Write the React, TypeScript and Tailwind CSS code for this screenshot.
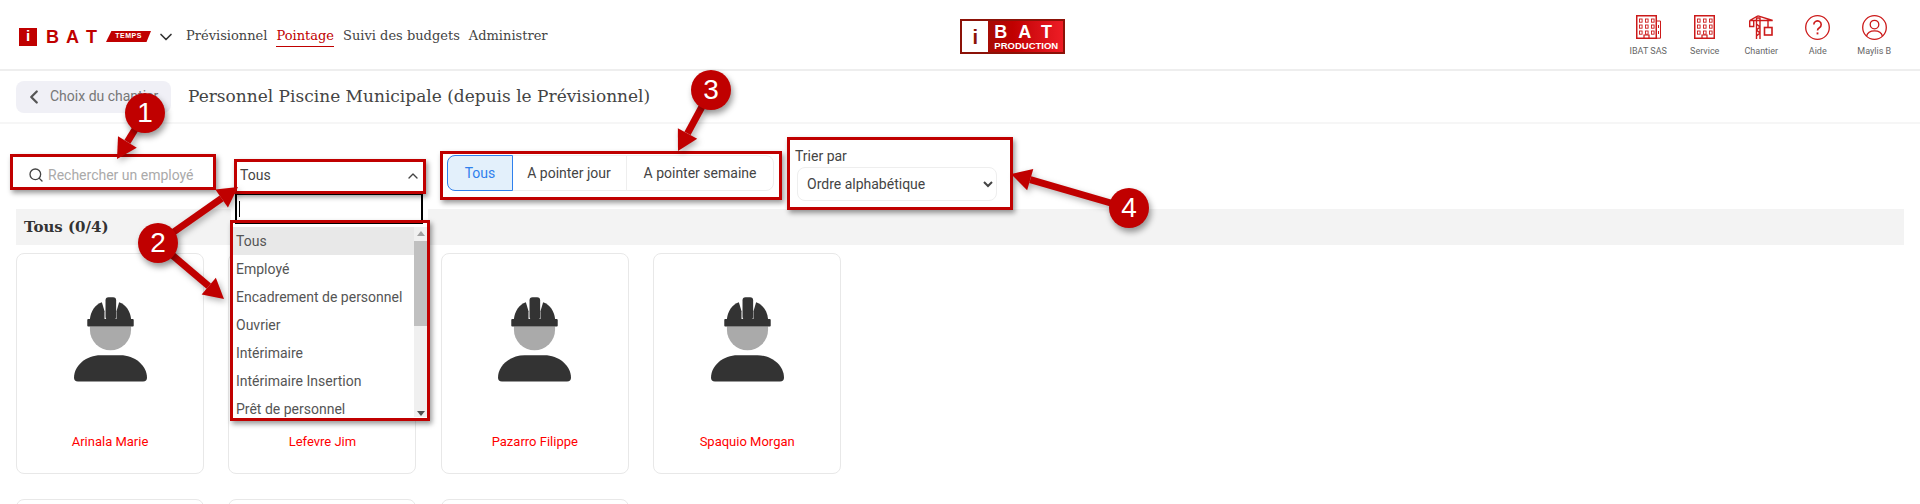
import { ChevronDown, ChevronLeft, ChevronUp, Search } from "lucide-react";

const NAV = ["Prévisionnel", "Pointage", "Suivi des budgets", "Administrer"];
const EMPLOYEES = ["Arinala Marie", "Lefevre Jim", "Pazarro Filippe", "Spaquio Morgan"];
const CATEGORIES = [
  "Tous",
  "Employé",
  "Encadrement de personnel",
  "Ouvrier",
  "Intérimaire",
  "Intérimaire Insertion",
  "Prêt de personnel",
];

const SLAB = "font-['DejaVu_Serif',serif]";
const RED = "#c00000";

function BuildingIcon({ wide }: { wide?: boolean }) {
  const columns = [5, 11, 17];
  const rows = [4, 10, 16];
  return (
    <svg width={wide ? 25 : 21} height="24" viewBox={wide ? "0 0 25 24" : "0 0 21 24"} fill="none" stroke="#cc1a1a">
      <rect x="0.75" y="0.75" width="19.5" height="22.5" strokeWidth="1.5" />
      {rows.map((y) =>
        columns.map((x) => <rect key={`${x}-${y}`} x={x - 1.5} y={y} width="2.6" height="3.2" strokeWidth="0.9" />),
      )}
      <path d="M8 23v-3h5v3" strokeWidth="1.2" />
      {wide ? <path d="M20.5 6h4v17.2h-4M22.5 10v3M22.5 16v3" strokeWidth="1" /> : null}
    </svg>
  );
}

function CraneIcon() {
  return (
    <svg width="25" height="24" viewBox="0 0 25 24" fill="none" stroke="#cc1a1a" strokeWidth="1.4">
      <path d="M7.5 24V3h3.5v21M7.5 9l3.5 3M11 12l-3.5 3M7.5 15l3.5 3M11 18l-3.5 3" />
      <path d="M0.7 5.5h23M0.7 5.5v6h4v-6M9 0.8L0.7 5.5M9 0.8l14.7 4.7" />
      <path d="M19 5.5v7" />
      <rect x="15.5" y="12.5" width="7.5" height="7.5" strokeWidth="1.6" />
    </svg>
  );
}

function HelpIcon() {
  return (
    <svg width="25" height="25" viewBox="0 0 25 25" fill="none" stroke="#cc1a1a" strokeWidth="1.3">
      <circle cx="12.5" cy="12.5" r="11.8" />
      <path d="M8.8 9.6a3.7 3.7 0 1 1 5.6 3.2c-1.3.8-1.9 1.4-1.9 2.8" strokeWidth="1.6" />
      <path d="M12.5 17.4v2" strokeWidth="1.8" />
    </svg>
  );
}

function UserIcon() {
  return (
    <svg width="25" height="25" viewBox="0 0 25 25" fill="none" stroke="#cc1a1a" strokeWidth="1.3">
      <circle cx="12.5" cy="12.5" r="11.8" />
      <circle cx="12.5" cy="9.6" r="4.3" />
      <path d="M4.6 21c.8-3.6 3.6-5.2 7.9-5.2s7.100 1.600 7.900 5.200" />
    </svg>
  );
}

function WorkerAvatar() {
  return (
    <svg width="73" height="85" viewBox="0 0 220 255" className="shrink-0">
      <path d="M48 88H172V98A62 62 0 0 1 48 98Z" fill="#aaaaaa" />
      <rect x="40" y="66" width="140" height="22" rx="3" fill="#333333" />
      <rect x="95" y="0" width="32" height="68" rx="9" fill="#333333" />
      <path d="M48 66C50 42 64 22 84 15L92 42V66Z" fill="#333333" />
      <path d="M172 66C170 42 156 22 136 15L128 42V66Z" fill="#333333" />
      <path d="M0 243C0 205 38 175 80 175H140C182 175 220 205 220 243Q220 254 208 254H12Q0 254 0 243Z" fill="#333333" />
    </svg>
  );
}

function Header() {
  return (
    <header className="grid h-[71px] grid-cols-[960px_105px_1fr] items-center border-b-2 border-[#eeeeee] bg-white pt-[4px]">
      <div className="flex items-center pl-[19px]">
        <span className="flex h-[18px] w-[18px] items-center justify-center bg-[#c00000] font-['Liberation_Sans',sans-serif] text-[15px] font-bold text-white">
          i
        </span>
        <span className="ml-[9px] w-[20px] font-['Liberation_Sans',sans-serif] text-[18px] leading-none font-black text-[#c00000]">B</span>
        <span className="w-[20px] font-['Liberation_Sans',sans-serif] text-[18px] leading-none font-black text-[#c00000]">A</span>
        <span className="w-[20px] font-['Liberation_Sans',sans-serif] text-[18px] leading-none font-black text-[#c00000]">T</span>
        <span className="flex h-[11px] w-[45px] items-center justify-center bg-[#c00000] font-['Liberation_Sans',sans-serif] text-[7px] font-bold tracking-[0.5px] text-white [clip-path:polygon(12%_0,100%_0,90%_100%,0_100%)]">
          TEMPS
        </span>
        <ChevronDown className="ml-[5px] h-5 w-5 text-[#333]" strokeWidth={2} />
        <nav className={`ml-[10px] flex gap-[9px] text-[13px] text-[#444] ${SLAB}`}>
          {NAV.map((item) => (
            <a
              key={item}
              className={item === "Pointage" ? "border-b-[1.5px] border-[#c00000] text-[#c00000]" : "border-b-[1.5px] border-transparent"}
            >
              {item}
            </a>
          ))}
        </nav>
      </div>

      <div className="flex h-[35px] items-center border-2 border-[#8c1208] bg-gradient-to-r from-[#8c1208] via-[#c00000] to-[#ee1c25]">
        <span className="flex h-full w-[28px] items-center justify-center bg-white font-['Liberation_Sans',sans-serif] text-[20px] font-black text-[#8c1208]">
          i
        </span>
        <span className="ml-[6px] flex flex-col font-['Liberation_Sans',sans-serif] leading-none font-bold text-white">
          <span className="text-[18px] tracking-[11px]">BAT</span>
          <span className="text-[9.500px] leading-[10px]">PRODUCTION</span>
        </span>
      </div>

      <div className="flex justify-end pr-[17.500px] font-['Roboto',sans-serif] text-[9px] text-[#666]">
        {[
          { label: "IBAT SAS", icon: <BuildingIcon wide /> },
          { label: "Service", icon: <BuildingIcon /> },
          { label: "Chantier", icon: <CraneIcon /> },
          { label: "Aide", icon: <HelpIcon /> },
          { label: "Maylis B", icon: <UserIcon /> },
        ].map(({ label, icon }) => (
          <div key={label} className="flex w-[56.500px] flex-col items-center gap-[5px]">
            <div className="flex h-[25px] items-center">{icon}</div>
            <span>{label}</span>
          </div>
        ))}
      </div>
    </header>
  );
}

function SubHeader() {
  return (
    <div className="flex h-[53px] items-center border-b-2 border-[#f6f6f6] pl-[16px]">
      <button
        type="button"
        className="flex h-[32px] w-[155px] items-center gap-[5px] rounded-lg bg-[#f0f0f6] pl-[7px] font-['Roboto',sans-serif] text-[14px] text-[#777]"
      >
        <ChevronLeft className="h-[22px] w-[22px] text-[#555]" strokeWidth={2.500} />
        Choix du chantier
      </button>
      <h1 className={`ml-[17px] pt-[1px] text-[17px] text-[#444] ${SLAB}`}>Personnel Piscine Municipale (depuis le Prévisionnel)</h1>
    </div>
  );
}

function CategorySelect() {
  return (
    <div className="relative ml-[14px] mt-[34px] h-[36px] w-[190px]">
      <div className="flex h-[35px] items-center justify-between pl-[8px] pr-[1px] text-[14px] text-[#444]">
        Tous
        <ChevronUp className="h-4 w-4 text-[#444]" />
      </div>
      <div className="absolute left-[-1px] top-[35px] z-10 w-[197px] bg-white text-[14px] text-[#555]">
        <div className="ml-[4px] mr-[5px] flex h-[31px] items-center border-2 border-black pl-[2px]">
          <span className="h-[16px] w-px bg-black" />
        </div>
        <div className="flex h-[197px] overflow-hidden pl-[2px] pt-[3px]">
          <ul className="w-[181px]">
            {CATEGORIES.map((category, index) => (
              <li key={category} className={`flex h-[28px] items-center pl-[3px] ${index === 0 ? "bg-[#e8e8e8]" : ""}`}>
                {category}
              </li>
            ))}
          </ul>
          <div className="mb-[4px] flex w-[13px] flex-col items-center bg-[#f0f0f0]">
            <span className="mt-[4px] h-0 w-0 border-x-[4px] border-b-[5px] border-x-transparent border-b-[#a0a0a0]" />
            <span className="mt-[5px] h-[85px] w-full bg-[#c0c0c0]" />
            <span className="mt-auto mb-[1px] h-0 w-0 border-x-[4px] border-t-[5px] border-x-transparent border-t-[#505050]" />
          </div>
        </div>
      </div>
    </div>
  );
}

function Toolbar() {
  return (
    <div className="flex h-[85px] font-['Roboto',sans-serif]">
      <label className="ml-[28px] mt-[40px] flex h-[22px] w-[190px] items-center gap-[4px]">
        <Search className="h-[16px] w-[16px] shrink-0 text-[#444]" />
        <input
          placeholder="Rechercher un employé"
          className="w-full text-[14px] outline-none placeholder:text-[#aaaaaa]"
        />
      </label>

      <CategorySelect />

      <div className="ml-[25px] mt-[31px] flex h-[36px] w-[327px] rounded-lg border border-[#eeeeee] text-[14px] text-[#444]">
        <span className="-m-px flex w-[66px] items-center justify-center rounded-l-lg border border-[#2f80ed] bg-[#e3f0fb] text-[#2f80ed]">
          Tous
        </span>
        <span className="flex w-[115px] items-center justify-center border-r border-[#eeeeee]">A pointer jour</span>
        <span className="flex flex-1 items-center justify-center">A pointer semaine</span>
      </div>

      <div className="ml-[21px] mt-[22px] flex w-[205px] flex-col text-[14px] text-[#444]">
        <span className="h-[20px] leading-[20px]">Trier par</span>
        <select className="mt-[1px] ml-[2px] h-[34px] w-[200px] rounded-lg border border-[#eeeeee] bg-white pl-[5px] pr-[4px] text-[14px] text-[#444] outline-none">
          <option>Ordre alphabétique</option>
        </select>
      </div>
    </div>
  );
}

function EmployeeCard({ name }: { name?: string }) {
  return (
    <div className="flex h-[221px] w-[188px] flex-col items-center rounded-lg border border-[#e8e8e8] bg-white pt-[43px]">
      <WorkerAvatar />
      <span className="mt-[50px] font-['Roboto',sans-serif] text-[13px] text-[#ff0000]">{name}</span>
    </div>
  );
}

function Annotations() {
  const arrows = [
    { from: [145, 113], to: [117, 159] },
    { from: [158, 243], to: [238, 187] },
    { from: [158, 243], to: [224, 299] },
    { from: [711, 90], to: [678, 151] },
    { from: [1128, 208], to: [1011, 174] },
  ];
  const badges = [
    { n: "1", className: "left-[125px] top-[93px]" },
    { n: "2", className: "left-[138px] top-[223px]" },
    { n: "3", className: "left-[691px] top-[70px]" },
    { n: "4", className: "left-[1109px] top-[188px]" },
  ];
  const boxes = [
    "left-[10px] top-[154px] h-[36px] w-[206px]",
    "left-[234px] top-[159px] h-[35px] w-[192px]",
    "left-[230px] top-[220px] h-[201px] w-[200px]",
    "left-[440px] top-[151px] h-[49px] w-[342px]",
    "left-[787px] top-[137px] h-[73px] w-[226px]",
  ];

  return (
    <>
      {boxes.map((box) => (
        <div key={box} className={`absolute z-20 border-[3px] border-[#c00000] shadow-[2px_3px_5px_rgba(0,0,0,0.4)] ${box}`} />
      ))}
      <svg className="pointer-events-none absolute left-0 top-0 z-20 h-[504px] w-[1920px] drop-shadow-[2px_3px_3px_rgba(0,0,0,0.3)]">
        {arrows.map(({ from, to }) => {
          const dx = to[0] - from[0];
          const dy = to[1] - from[1];
          const len = Math.hypot(dx, dy);
          const ux = dx / len;
          const uy = dy / len;
          const bx = to[0] - ux * 20;
          const by = to[1] - uy * 20;
          const head = `${to[0]},${to[1]} ${bx - uy * 11},${by + ux * 11} ${bx + uy * 11},${by - ux * 11}`;
          return (
            <g key={`${to[0]}-${to[1]}`}>
              <line x1={from[0]} y1={from[1]} x2={bx} y2={by} stroke={RED} strokeWidth="7" />
              <polygon points={head} fill={RED} />
            </g>
          );
        })}
      </svg>
      {badges.map(({ n, className }) => (
        <div
          key={n}
          className={`absolute z-30 flex h-[40px] w-[40px] items-center justify-center rounded-full bg-[#c00000] font-['Liberation_Sans',sans-serif] text-[28px] text-white shadow-[2px_4px_6px_rgba(0,0,0,0.4)] ${className}`}
        >
          {n}
        </div>
      ))}
    </>
  );
}

export default function App() {
  return (
    <div className="relative h-[504px] w-[1920px] overflow-hidden bg-white">
      <Header />
      <SubHeader />
      <Toolbar />
      <section className="px-[16px]">
        <h2 className={`flex h-[36px] items-center bg-[#f3f3f3] pl-[8px] text-[15px] font-bold text-[#333] ${SLAB}`}>Tous (0/4)</h2>
        <div className="mt-[8px] grid grid-cols-[repeat(4,188px)] gap-x-[24.400px] gap-y-[25px]">
          {EMPLOYEES.map((name) => (
            <EmployeeCard key={name} name={name} />
          ))}
          <EmployeeCard />
          <EmployeeCard />
          <EmployeeCard />
        </div>
      </section>
      <Annotations />
    </div>
  );
}
